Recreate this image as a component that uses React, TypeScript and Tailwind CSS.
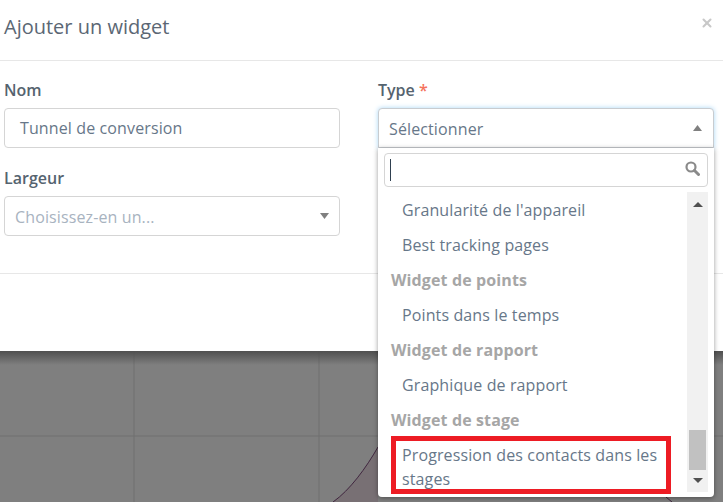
import { X } from 'lucide-react';

const font = { fontFamily: '"Open Sans", sans-serif' };

function Caret({ up, className }: { up?: boolean; className: string }) {
  return (
    <svg viewBox="0 0 8 5" preserveAspectRatio="none" className={className}>
      <path d={up ? 'M4 0 8 5H0Z' : 'M0 0H8L4 5Z'} fill="currentColor" />
    </svg>
  );
}

function GroupLabel({ children }: { children: string }) {
  return <div className="flex h-[35px] items-center pl-[7px] text-[16px] font-bold tracking-[0.12px] text-[#a6a6a6]">{children}</div>;
}

function Option({ children }: { children: string }) {
  return <div className="flex h-[35px] items-center pl-[18px] text-[16px] tracking-[0.12px] text-[#677789]">{children}</div>;
}

export default function App() {
  return (
    <div className="relative h-[502px] w-[723px] overflow-hidden bg-[#7f7f7f]" style={font}>
      {/* chart behind the backdrop */}
      <svg className="absolute inset-0" width="723" height="502" viewBox="0 0 723 502">
        <path d="M333 502C350 490 366 468 378 447V502Z" fill="#787074" />
        <path d="M134 351V502M319 351V502M0 436H723" stroke="#707070" strokeWidth="1" fill="none" />
        <path d="M333 502C350 490 366 468 378 447M666 497 672 502" stroke="#40263f" strokeWidth="1" fill="none" />
      </svg>
      <div className="absolute inset-x-0 top-[351px] h-[14px] bg-gradient-to-b from-[#4f4f4f] to-transparent" />

      {/* modal */}
      <div className="relative h-[351px] bg-white text-[#4e5d6c]">
        <div className="flex h-[61px] items-start justify-between border-b border-[#e7e7e7] pl-[4px] pr-[9px] pt-[13px]">
          <h2 className="text-[20px] leading-[28px] text-[#5b6774]">Ajouter un widget</h2>
          <X className="mt-[3px] h-[14px] w-[14px] text-[#c8c8c8]" strokeWidth={3.5} />
        </div>
        <div className="flex h-[213px] gap-[38px] border-b border-[#e7e7e7] pl-[4px] pr-[9px] pt-[18px]">
          <div className="flex w-[336px] flex-col">
            <label className="text-[16px] font-semibold leading-[22px] text-[#55636f]">Nom</label>
            <div className="mt-[7px] flex h-[40px] items-center rounded-[4px] border border-[#d5d5d5] pl-[15px] text-[16px] tracking-[0.12px] text-[#677789]">
              Tunnel de conversion
            </div>
            <label className="mt-[19px] text-[16px] font-semibold leading-[22px] text-[#55636f]">Largeur</label>
            <div className="mt-[7px] flex h-[40px] items-center justify-between rounded-[4px] border border-[#d5d5d5] pl-[10px] pr-[10px] text-[16px] tracking-[0.12px] text-[#a8b3bf]">
              <span className="mt-[2px]">Choisissez-en un...</span>
              <Caret className="h-[6px] w-[9px] text-[#808080]" />
            </div>
          </div>
          <div className="w-[336px]">
            <label className="block text-[16px] font-semibold leading-[22px] text-[#55636f]">
              Type <span className="text-[#f5735c]">*</span>
            </label>
          </div>
        </div>
      </div>

      {/* open select dropdown */}
      <div className="absolute left-[378px] top-[108px] w-[336px]">
        <div className="flex h-[40px] items-center justify-between rounded-t-[4px] border border-[#c8ccd0] bg-white pl-[10px] pr-[11px] text-[16px] tracking-[0.12px] text-[#677789] shadow-[0_0_5px_#a9d6f5]">
          <span className="mt-[2px]">Sélectionner</span>
          <Caret up className="h-[6px] w-[9px] text-[#808080]" />
        </div>
        <div className="h-[349px] rounded-b-[4px] bg-white px-[6px] pt-[5px] shadow-[0_1px_5px_#00000066]">
          <div className="flex h-[34px] items-center justify-between rounded-[4px] border border-[#d5d5d5] pl-[5px] pr-[7px]">
            <span className="h-[22px] w-px bg-[#2f4050]" />
            <svg viewBox="0 0 15 15" className="mb-[4px] h-[15px] w-[15px] text-[#8a8a8a]">
              <circle cx="6" cy="6" r="4.5" fill="none" stroke="currentColor" strokeWidth="2.2" />
              <path d="M9.5 9.5 13.5 13.5" stroke="currentColor" strokeWidth="3" strokeLinecap="round" />
            </svg>
          </div>
          <div className="mt-[5px] flex h-[305px] items-start justify-between">
            <div className="w-[300px]">
              <Option>Granularité de l'appareil</Option>
              <Option>Best tracking pages</Option>
              <GroupLabel>Widget de points</GroupLabel>
              <Option>Points dans le temps</Option>
              <GroupLabel>Widget de rapport</GroupLabel>
              <Option>Graphique de rapport</Option>
              <GroupLabel>Widget de stage</GroupLabel>
              <div className="-mt-px ml-[7px] h-[58px] w-[280px] overflow-hidden border-[5px] border-[#ed1c24] pl-[6px] pt-[2px] text-[16px] leading-[24px] tracking-[0.12px] text-[#677789]">
                Progression des contacts dans les stages
              </div>
            </div>
            <div className="flex h-[300px] w-[21px] flex-col items-center bg-[#f1f1f1] pt-[10px]">
              <Caret up className="h-[5px] w-[10px] text-[#505050]" />
              <div className="mt-auto h-[40px] w-[17px] bg-[#c1c1c1]" />
              <Caret className="mb-[9px] mt-[8px] h-[5px] w-[10px] text-[#505050]" />
            </div>
          </div>
        </div>
      </div>
    </div>
  );
}
